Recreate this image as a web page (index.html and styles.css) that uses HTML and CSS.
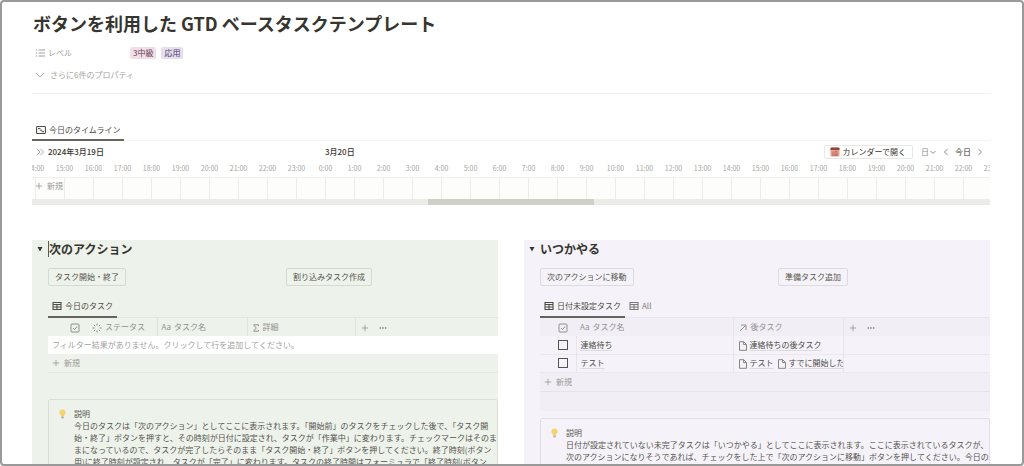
FILE: index.html
```html
<!DOCTYPE html>
<html lang="ja">
<head>
<meta charset="utf-8">
<title>ボタンを利用した GTD ベースタスクテンプレート</title>
<link rel="stylesheet" href="styles.css">
</head>
<body>
<svg class="defs" aria-hidden="true">
  <symbol id="i-table" viewBox="0 0 10 10"><path d="M1 1.5h8v7H1zM1 3.5h8M1 6h8M5 3.5v5" fill="none" stroke="currentColor" stroke-width="1.1"/></symbol>
  <symbol id="i-check" viewBox="0 0 10 10"><rect x="1" y="1" width="8" height="8" rx="1" fill="none" stroke="currentColor"/><path d="M3 5l1.5 1.6L7.2 3.4" fill="none" stroke="currentColor"/></symbol>
  <symbol id="i-page" viewBox="0 0 10 10"><path d="M1.5.7h4.2l2.8 2.8v5.8h-7zM5.6.8v2.8h2.8" fill="none" stroke="currentColor" stroke-width=".9"/></symbol>
  <symbol id="i-plus" viewBox="0 0 10 10"><path d="M5 1v8M1 5h8" fill="none" stroke="currentColor"/></symbol>
  <symbol id="i-dots" viewBox="0 0 10 10"><g fill="currentColor"><circle cx="1.7" cy="5" r="1.1"/><circle cx="5" cy="5" r="1.1"/><circle cx="8.3" cy="5" r="1.1"/></g></symbol>
  <symbol id="i-bulb" viewBox="0 0 10 12"><path d="M5 1a3.4 3.4 0 0 0-2 6.200L3.400 8.500h3.200L7 7.200A3.400 3.400 0 0 0 5 1z" fill="#f3d36b"/><path d="M3.600 8.800h2.800v1.400L5.800 11H4.200l-.6-.8z" fill="#a9b0a6"/></symbol>
</svg>
<main class="frame">
  <h1 class="title">ボタンを利用した GTD ベースタスクテンプレート</h1>

  <dl class="property">
    <dt class="property-name"><svg class="icon" viewBox="0 0 10 10"><path d="M3.500 2H10M3.500 5H10M3.500 8H10M.8 2h1.400M.8 5h1.400M.8 8h1.400" stroke="currentColor" fill="none"/></svg>レベル</dt>
    <dd class="property-tags"><span class="tag tag-pink">3中級</span><span class="tag tag-purple">応用</span></dd>
  </dl>
  <button class="more"><svg class="icon" viewBox="0 0 10 10"><path d="M1 3l4 4 4-4" stroke="currentColor" fill="none"/></svg>さらに6件のプロパティ</button>
  <hr class="divider">

  <section class="timeline">
    <nav class="tabs tabs-wide">
      <button class="tab tab-active"><svg class="icon" viewBox="0 0 10 10"><rect x=".6" y="1.500" width="8.800" height="7" rx=".8" fill="none" stroke="currentColor" stroke-width="1.100"/><path d="M2 3.600h2.500M3.800 5.200h2.500M5.600 6.700H8" stroke="currentColor" fill="none"/></svg>今日のタイムライン</button>
    </nav>
    <div class="dates">
      <div class="date-first"><svg class="icon faint" viewBox="0 0 10 10"><path d="M2 2L5 5 2 8M5.500 2L8.500 5l-3 3" stroke="currentColor" fill="none"/></svg><strong>2024年3月19日</strong></div>
      <strong>3月20日</strong>
      <div class="controls">
        <button class="open-calendar"><svg class="icon" viewBox="0 0 10 10"><rect x=".5" y=".5" width="9" height="9" rx="1" fill="#e3a196"/><path d="M.5 1.500a1 1 0 0 1 1-1h7a1 1 0 0 1 1 1V3h-9z" fill="#8c4a3f"/><path d="M3 4.500v3.500M5 4.500h2v3.300H5zM2 8.300h6" stroke="#c25f50" fill="none" stroke-width=".8"/></svg>カレンダーで開く</button>
        <button class="plain">日<svg class="icon-small" viewBox="0 0 8 8"><path d="M1.500 3L4 5.500 6.500 3" stroke="currentColor" fill="none"/></svg></button>
        <button class="plain" aria-label="前へ"><svg class="icon-small" viewBox="0 0 8 8"><path d="M5.500 1L2.500 4l3 3" stroke="currentColor" fill="none"/></svg></button>
        <button class="plain today">今日</button>
        <button class="plain" aria-label="次へ"><svg class="icon-small" viewBox="0 0 8 8"><path d="M2.500 1l3 3-3 3" stroke="currentColor" fill="none"/></svg></button>
      </div>
    </div>
    <div class="hours">
      <span>14:00</span><span>15:00</span><span>16:00</span><span>17:00</span><span>18:00</span><span>19:00</span><span>20:00</span><span>21:00</span><span>22:00</span><span>23:00</span><span>0:00</span><span>1:00</span><span>2:00</span><span>3:00</span><span>4:00</span><span>5:00</span><span>6:00</span><span>7:00</span><span>8:00</span><span>9:00</span><span>10:00</span><span>11:00</span><span>12:00</span><span>13:00</span><span>14:00</span><span>15:00</span><span>16:00</span><span>17:00</span><span>18:00</span><span>19:00</span><span>20:00</span><span>21:00</span><span>22:00</span><span>23:00</span>
    </div>
    <div class="lanes"><button class="new"><svg class="icon-small"><use href="#i-plus"/></svg>新規</button></div>
    <div class="scroll"><div class="thumb"></div></div>
  </section>

  <div class="columns">
    <section class="panel panel-green">
      <h2 class="heading"><button class="toggle" aria-label="折りたたむ"><svg class="icon-toggle" viewBox="0 0 6 6"><path d="M.5 1h5L3 5.500z" fill="currentColor"/></svg></button><span class="caret">次のアクション</span></h2>
      <div class="content">
        <div class="actions"><div><button class="action">タスク開始・終了</button></div><div><button class="action">割り込みタスク作成</button></div></div>
        <nav class="tabs"><button class="tab tab-active"><svg class="icon"><use href="#i-table"/></svg>今日のタスク</button></nav>
        <table class="table">
          <colgroup><col class="c-check-wide"><col class="c-status"><col class="c-name"><col class="c-detail"><col></colgroup>
          <thead><tr>
            <th class="check-head"><svg class="icon"><use href="#i-check"/></svg></th>
            <th><svg class="icon" viewBox="0 0 10 10"><path d="M5 .5v2M5 7.500v2M.5 5h2M7.500 5h2M1.800 1.800l1.400 1.400M6.800 6.800l1.400 1.400M1.800 8.200l1.400-1.400M6.800 3.200l1.400-1.400" stroke="currentColor" fill="none"/></svg>ステータス</th>
            <th><span class="aa">Aa</span>タスク名</th>
            <th><svg class="icon-small" viewBox="0 0 8 8"><path d="M6.500 2V.8h-5L4.300 4 1.500 7.200h5V6" stroke="currentColor" fill="none"/></svg>詳細</th>
            <th class="tools"><svg class="icon-small"><use href="#i-plus"/></svg><svg class="icon-small dots"><use href="#i-dots"/></svg></th>
          </tr></thead>
          <tbody><tr class="empty"><td colspan="5">フィルター結果がありません。クリックして行を追加してください。</td></tr></tbody>
        </table>
        <div class="new-row"><button class="new"><svg class="icon-small"><use href="#i-plus"/></svg>新規</button></div>
        <aside class="callout">
          <svg class="bulb"><use href="#i-bulb"/></svg>
          <p>説明<br>今日のタスクは「次のアクション」としてここに表示されます。「開始前」のタスクをチェックした後で、「タスク開<br>始・終了」ボタンを押すと、その時刻が日付に設定され、タスクが「作業中」に変わります。チェックマークはそのま<br>まになっているので、タスクが完了したらそのまま「タスク開始・終了」ボタンを押してください。終了時刻(ボタン<br>用)に終了時刻が設定され、タスクが「完了」に変わります。タスクの終了時間はフォーミュラで「終了時刻(ボタン</p>
        </aside>
      </div>
    </section>

    <section class="panel panel-purple">
      <h2 class="heading"><button class="toggle" aria-label="折りたたむ"><svg class="icon-toggle" viewBox="0 0 6 6"><path d="M.5 1h5L3 5.500z" fill="currentColor"/></svg></button><span>いつかやる</span></h2>
      <div class="content">
        <div class="actions"><div><button class="action">次のアクションに移動</button></div><div><button class="action">準備タスク追加</button></div></div>
        <nav class="tabs"><button class="tab tab-active"><svg class="icon"><use href="#i-table"/></svg>日付未設定タスク</button><button class="tab"><svg class="icon"><use href="#i-table"/></svg>All</button></nav>
        <table class="table">
          <colgroup><col class="c-check"><col class="c-task"><col class="c-next"><col></colgroup>
          <thead><tr>
            <th class="check-head"><svg class="icon"><use href="#i-check"/></svg></th>
            <th><span class="aa">Aa</span>タスク名</th>
            <th><svg class="icon" viewBox="0 0 10 10"><path d="M2 8l5.500-5.500M3 2h5v5" stroke="currentColor" fill="none"/></svg>後タスク</th>
            <th class="tools"><svg class="icon-small"><use href="#i-plus"/></svg><svg class="icon-small dots"><use href="#i-dots"/></svg></th>
          </tr></thead>
          <tbody>
            <tr><td class="check-cell"><input class="box" type="checkbox" aria-label="連絡待ち"></td><td><a class="link" href="#">連絡待ち</a></td><td><svg class="icon page"><use href="#i-page"/></svg><a class="link" href="#">連絡待ちの後タスク</a></td><td></td></tr>
            <tr><td class="check-cell"><input class="box" type="checkbox" aria-label="テスト"></td><td><a class="link" href="#">テスト</a></td><td><svg class="icon page"><use href="#i-page"/></svg><a class="link" href="#">テスト</a><svg class="icon page page-next"><use href="#i-page"/></svg><a class="link" href="#">すでに開始した</a></td><td></td></tr>
          </tbody>
        </table>
        <div class="new-row"><button class="new"><svg class="icon-small"><use href="#i-plus"/></svg>新規</button></div>
        <div class="summary"></div>
        <aside class="callout callout-near">
          <svg class="bulb"><use href="#i-bulb"/></svg>
          <p>説明<br>日付が設定されていない未完了タスクは「いつかやる」としてここに表示されます。ここに表示されているタスクが、<br>次のアクションになりそうであれば、チェックをした上で「次のアクションに移動」ボタンを押してください。今日の</p>
        </aside>
      </div>
    </section>
  </div>
</main>
</body>
</html>
```

FILE: styles.css
```css
* { box-sizing: border-box; }

body {
  margin: 0;
  background: #fff;
  color: #55534e;
  font: 8px/12px "Noto Sans CJK JP", "Noto Sans", sans-serif;
}

button {
  margin: 0;
  padding: 0;
  border: 0;
  background: none;
  color: inherit;
  font: inherit;
  display: inline-flex;
  align-items: center;
}

p, h1, h2, dl, dd { margin: 0; }
strong { font-weight: 500; }

.defs { position: absolute; width: 0; height: 0; }
.icon { width: 10px; height: 10px; flex: none; }
.icon-small { width: 8px; height: 8px; flex: none; }
.faint { color: #aaa9a6; }

.frame {
  height: 100vh;
  overflow: hidden;
  padding: 8px 32px 0 30px;
  border: 2px solid #999;
  border-radius: 4px;
}

.title {
  padding: 0 1px;
  font-size: 18px;
  line-height: 26px;
  font-weight: 700;
  color: #37352f;
}

.property {
  display: flex;
  align-items: center;
  height: 16px;
  margin-top: 9px;
  padding-left: 3px;
}
.property-name { display: flex; align-items: center; gap: 3px; width: 95px; color: #a09f9b; }
.property-tags { display: flex; gap: 5px; }
.tag { padding: 0 3px; border-radius: 2px; color: #6a3a54; }
.tag-pink { background: #f0dfe7; }
.tag-purple { background: #e6deee; color: #543a6a; }

.more {
  display: flex;
  gap: 5px;
  height: 12px;
  margin-top: 8px;
  padding-left: 3px;
  color: #a5a4a0;
}
.divider { height: 1px; margin: 12px 0 28px; border: 0; background: #efefed; }

.tabs { display: flex; align-items: stretch; height: 20px; border-bottom: 1px solid rgba(55, 53, 47, .06); }
.tabs-wide { height: 19px; }
.tab { gap: 3px; padding: 0 4px 2px; color: #7b7975; margin-bottom: -1px; border-bottom: 2px solid transparent; }
.tab-active { color: #4d4b46; border-color: #65635e; }

.dates { display: grid; grid-template-columns: 293px auto 1fr; align-items: center; height: 22px; color: #37352f; }
.date-first { display: flex; align-items: center; gap: 3px; padding-left: 3px; }
.controls { display: flex; align-items: center; justify-content: flex-end; gap: 5px; padding-right: 6px; }
.open-calendar { gap: 2px; height: 14px; margin-right: 3px; padding: 0 6px 0 5px; border: 1px solid #e8e8e6; border-radius: 2px; }
.plain { color: #8e8d89; }
.today { color: #37352f; }

.hours { display: flex; height: 14px; margin-left: -11px; color: #a6a5a2; font-size: 7px; line-height: 10px; clip-path: inset(0 0 0 11px); overflow: hidden; }
.hours span { flex: 0 0 29px; text-align: center; }
.lanes {
  height: 22px;
  padding: 2px 3px 0;
  border-top: 1px solid #efefed;
  background: #fdfdfc linear-gradient(to right, #ececea 1px, transparent 1px) 3px 0 / 29px 100%;
}
.new { gap: 4px; color: #9a9995; }
.scroll { height: 6px; background: #ebebe8; }
.thumb { width: 17.4%; height: 6px; margin-left: 41.3%; background: #d0d0cb; border-radius: 1px; }

.columns { display: grid; grid-template-columns: 1fr 1fr; gap: 26px; margin-top: 35px; }
.panel { min-width: 0; min-height: 240px; }
.panel-green { background: #edf2eb; }
.panel-purple { background: #f5f3f9; }
.heading { display: flex; align-items: center; height: 18px; font-size: 12px; line-height: 16px; color: #37352f; }
.toggle { width: 16px; justify-content: center; }
.icon-toggle { width: 6px; height: 6px; }
.caret { box-shadow: -1px 0 #5c5a55; margin-left: 1px; }
.content { padding-left: 16px; }
.actions { display: grid; grid-template-columns: 1fr 1fr; gap: 26px; padding-top: 10px; }
.action { height: 18px; padding: 0 6px; border: 1px solid rgba(55, 53, 47, .12); border-radius: 2px; }
.content .tabs { margin-top: 12px; }

.table { width: 100%; table-layout: fixed; border-collapse: collapse; }
.table tr { height: 18px; }
.table th, .table td {
  height: 18px;
  padding: 0 4px;
  overflow: hidden;
  white-space: nowrap;
  text-align: left;
  font-weight: 400;
  border-right: 1px solid rgba(55, 53, 47, .07);
}
.table th { color: #92918c; }
.table th:first-child, .table th:last-child, .table td:last-child { border-right: 0; }
.table svg { vertical-align: middle; margin-right: 3px; }
.panel-purple thead, .panel-purple .new-row, .summary { background: #f1eef6; }
.panel-purple tbody tr { border-bottom: 1px solid rgba(55, 53, 47, .05); }
.aa { margin-right: 3px; }
.table .check-head { text-align: right; padding-right: 5px; }
.c-check-wide { width: 40px; }
.c-status { width: 69px; }
.c-name { width: 90px; }
.c-detail { width: 108px; }
.c-check { width: 36px; }
.c-task { width: 157px; }
.c-next { width: 110px; }
.table .tools { padding-left: 5px; }
.table .tools .dots { margin-left: 7px; }
.empty { background: #fff; color: #a3a29e; }
.check-cell { line-height: 0; }
.table .check-cell { text-align: right; padding-right: 8px; }
.box { appearance: none; width: 10px; height: 10px; margin: 0; border: 1px solid #55534e; vertical-align: middle; }
.link { color: #4d4b46; text-decoration: underline; text-decoration-color: #dddbe0; text-underline-offset: 2px; }
.table .page { color: #7b7975; margin-right: 2px; }
.table .page-next { margin-left: 3px; }
.new-row { display: flex; height: 19px; padding-left: 4px; border-bottom: 1px solid rgba(55, 53, 47, .06); }
.summary { height: 19px; }

.callout {
  display: flex;
  gap: 7px;
  margin-top: 26px;
  padding: 8px 0 8px 9px;
  border: 1px solid rgba(55, 53, 47, .1);
  border-radius: 2px;
}
.callout p { white-space: nowrap; }
.callout-near { margin-top: 7px; }
.bulb { width: 9px; height: 12px; flex: none; }
```
